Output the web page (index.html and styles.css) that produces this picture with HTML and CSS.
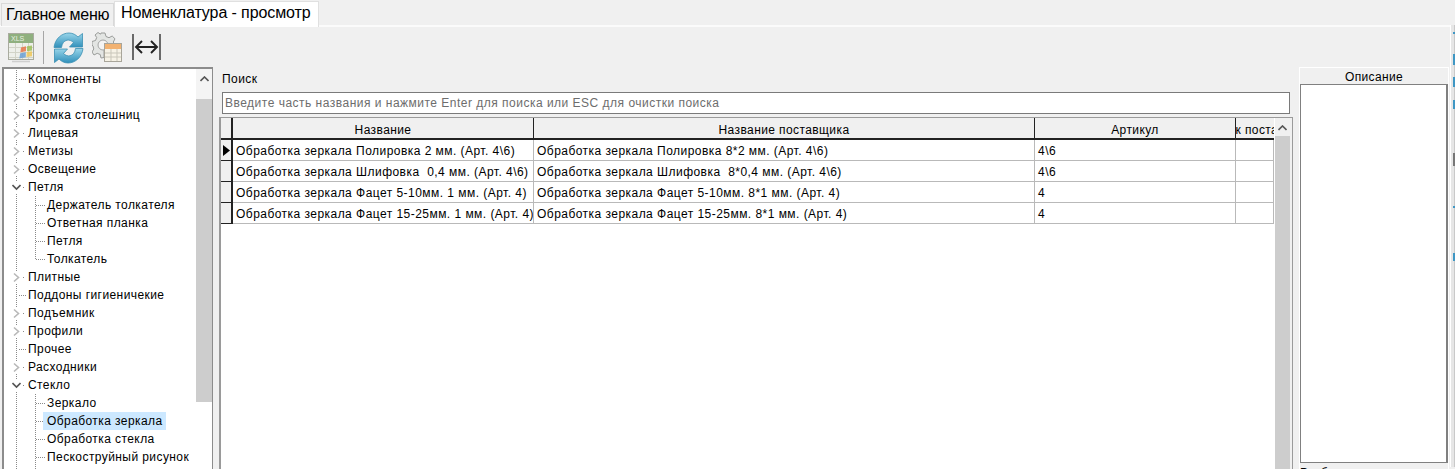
FILE: index.html
```html
<!DOCTYPE html>
<html lang="ru">
<head>
<meta charset="utf-8">
<title>Номенклатура - просмотр</title>
<link rel="stylesheet" href="styles.css">
</head>
<body>
<div class="page">
  <div class="tabs">
    <div class="tab">Главное меню</div>
    <div class="tab active">Номенклатура - просмотр</div>
  </div>
  <div class="toolbar">
    <svg class="ic ic-xls" width="28" height="31" viewBox="0 0 28 31">
      <rect x="1.5" y="1.5" width="25" height="26" fill="#eef0ea" stroke="#a9ab9f"/>
      <rect x="2" y="2" width="24" height="9" fill="#8fb07f"/>
      <text x="4" y="9" class="xls-t">XLS</text>
      <path d="M2 15.5H26M2 20.5H26M2 25.5H26M8.5 11V27M15.5 11V27M21.5 11V27" stroke="#d2d4c8" fill="none"/>
      <g class="flag">
        <path d="M14 15.5l5-1.2v5l-5.6 1z" fill="#e8764a"/>
        <path d="M20 14.2l5-.7v5l-5 .7z" fill="#9dc05c"/>
        <path d="M13.2 21.2l5.6-1v5l-6.5 1.2z" fill="#6a9fd4"/>
        <path d="M19.8 20l5.2-.7v5l-5.6.8z" fill="#f0c85a"/>
      </g>
      <path d="M5 29.5H23" stroke="#cfcfcf" stroke-width="1.5"/>
    </svg>
    <div class="sep"></div>
    <svg class="ic ic-ref" width="31" height="32" viewBox="0 0 31 32">
      <defs>
        <linearGradient id="bl" x1="0" y1="0" x2="0" y2="1">
          <stop offset="0" stop-color="#9ad6ea"/>
          <stop offset="1" stop-color="#2f8fba"/>
        </linearGradient>
      </defs>
      <g fill="url(#bl)" stroke="#3b8fb2" stroke-width=".8">
        <path d="M1 15.500C2 6.500 9 1 16 1C20 1 23 3 25 5L29.500 1.500V15H16.500L20.500 10.500C18.500 8.500 16 7.800 14 8.200C11 8.800 9 11.500 8.500 15.500Z"/>
        <path d="M30 16.500C29 25.500 22 31 15 31C11 31 8 29 6 27L1.500 30.500V17H14.500L10.500 21.500C12.500 23.500 15 24.200 17 23.800C20 23.200 22 20.500 22.500 16.500Z"/>
      </g>
    </svg>
    <svg class="ic ic-gear" width="30" height="30" viewBox="0 0 30 30">
      <path d="M9 1h4l1 3.500 3 1.200 3.200-1.700 2.800 2.800-1.700 3.200 1 2.500H12v13l-3 .5-.8-3.500-3-1.200L2 23l-2-3 1.800-3L1 14l-1-1v-3.500l3.500-1 1.200-3L3 3l3-2.500 2.500 1.700z" fill="#e3e5e3" stroke="#9a9c9a"/>
      <circle cx="11" cy="13" r="5" fill="#f4f4f4" stroke="#a4a6a4"/>
      <rect x="12.500" y="11.500" width="17" height="18" fill="#f6f2e6" stroke="#a8a59a"/>
      <rect x="13" y="12" width="16" height="5" fill="#f2b271"/>
      <path d="M13 21h16M13 25h16M19 17v12M25 17v12" stroke="#c9c6ba" fill="none"/>
    </svg>
    <svg class="ic ic-fit" width="29" height="28" viewBox="0 0 29 28">
      <path d="M1 1V27M28 1V27" stroke="#222" stroke-width="1.300" fill="none"/>
      <path d="M4 14H25M10 8L4 14L10 20M19 8L25 14L19 20" stroke="#222" stroke-width="1.900" fill="none"/>
    </svg>
  </div>
  <div class="main">
    <div class="tree">
      <div class="tree-list">
        <div class="node"><span class="stem"></span><span class="tick"></span><span class="lbl">Компоненты</span></div>
        <div class="node"><span class="stem"><svg class="chev" width="9" height="11" viewBox="0 0 9 11"><path d="M2 1.500L6.500 5.500L2 9.500" class="chev-c"/></svg></span><span class="tick short"></span><span class="lbl">Кромка</span></div>
        <div class="node"><span class="stem"><svg class="chev" width="9" height="11" viewBox="0 0 9 11"><path d="M2 1.500L6.500 5.500L2 9.500" class="chev-c"/></svg></span><span class="tick short"></span><span class="lbl">Кромка столешниц</span></div>
        <div class="node"><span class="stem"><svg class="chev" width="9" height="11" viewBox="0 0 9 11"><path d="M2 1.500L6.500 5.500L2 9.500" class="chev-c"/></svg></span><span class="tick short"></span><span class="lbl">Лицевая</span></div>
        <div class="node"><span class="stem"><svg class="chev" width="9" height="11" viewBox="0 0 9 11"><path d="M2 1.500L6.500 5.500L2 9.500" class="chev-c"/></svg></span><span class="tick short"></span><span class="lbl">Метизы</span></div>
        <div class="node"><span class="stem"><svg class="chev" width="9" height="11" viewBox="0 0 9 11"><path d="M2 1.500L6.500 5.500L2 9.500" class="chev-c"/></svg></span><span class="tick short"></span><span class="lbl">Освещение</span></div>
        <div class="node"><span class="stem"><svg class="chev" width="9" height="11" viewBox="0 0 9 11"><path d="M.5 3L4.500 7L8.500 3" class="chev-o"/></svg></span><span class="tick short"></span><span class="lbl">Петля</span></div>
        <div class="node"><span class="stem"></span><span class="stem2"></span><span class="tick"></span><span class="lbl">Держатель толкателя</span></div>
        <div class="node"><span class="stem"></span><span class="stem2"></span><span class="tick"></span><span class="lbl">Ответная планка</span></div>
        <div class="node"><span class="stem"></span><span class="stem2"></span><span class="tick"></span><span class="lbl">Петля</span></div>
        <div class="node"><span class="stem"></span><span class="stem2 last"></span><span class="tick"></span><span class="lbl">Толкатель</span></div>
        <div class="node"><span class="stem"><svg class="chev" width="9" height="11" viewBox="0 0 9 11"><path d="M2 1.500L6.500 5.500L2 9.500" class="chev-c"/></svg></span><span class="tick short"></span><span class="lbl">Плитные</span></div>
        <div class="node"><span class="stem"></span><span class="tick"></span><span class="lbl">Поддоны гигиеничекие</span></div>
        <div class="node"><span class="stem"><svg class="chev" width="9" height="11" viewBox="0 0 9 11"><path d="M2 1.500L6.500 5.500L2 9.500" class="chev-c"/></svg></span><span class="tick short"></span><span class="lbl">Подъемник</span></div>
        <div class="node"><span class="stem"><svg class="chev" width="9" height="11" viewBox="0 0 9 11"><path d="M2 1.500L6.500 5.500L2 9.500" class="chev-c"/></svg></span><span class="tick short"></span><span class="lbl">Профили</span></div>
        <div class="node"><span class="stem"></span><span class="tick"></span><span class="lbl">Прочее</span></div>
        <div class="node"><span class="stem"><svg class="chev" width="9" height="11" viewBox="0 0 9 11"><path d="M2 1.500L6.500 5.500L2 9.500" class="chev-c"/></svg></span><span class="tick short"></span><span class="lbl">Расходники</span></div>
        <div class="node"><span class="stem"><svg class="chev" width="9" height="11" viewBox="0 0 9 11"><path d="M.5 3L4.500 7L8.500 3" class="chev-o"/></svg></span><span class="tick short"></span><span class="lbl">Стекло</span></div>
        <div class="node"><span class="stem"></span><span class="stem2"></span><span class="tick"></span><span class="lbl">Зеркало</span></div>
        <div class="node"><span class="stem"></span><span class="stem2"></span><span class="tick"></span><span class="lbl selected">Обработка зеркала</span></div>
        <div class="node"><span class="stem"></span><span class="stem2"></span><span class="tick"></span><span class="lbl">Обработка стекла</span></div>
        <div class="node"><span class="stem"></span><span class="stem2"></span><span class="tick"></span><span class="lbl">Пескоструйный рисунок</span></div>
        <div class="node"><span class="stem"></span><span class="stem2"></span></div>
      </div>
      <div class="vbar tree-bar">
        <div class="vbar-up"><svg width="9" height="6" viewBox="0 0 9 6"><path d="M.5 5L4.500 1L8.500 5" class="up"/></svg></div>
        <div class="vbar-thumb"></div>
      </div>
    </div>

    <div class="center">
      <div class="search-label">Поиск</div>
      <input class="search" type="text" placeholder="Введите часть названия и нажмите Enter для поиска или ESC для очистки поиска">
      <div class="grid">
        <div class="grid-body">
          <div class="row head">
            <div class="ind"></div>
            <div class="cell c1">Название</div>
            <div class="cell c2">Название поставщика</div>
            <div class="cell c3">Артикул</div>
            <div class="cell c4"><span>Срок поставки</span></div>
          </div>
          <div class="row">
            <div class="ind"><svg width="7" height="11" viewBox="0 0 7 11"><path d="M0 0L7 5.500L0 11Z"/></svg></div>
            <div class="cell c1">Обработка зеркала Полировка 2 мм. (Арт. 4\6)</div>
            <div class="cell c2">Обработка зеркала Полировка 8*2 мм. (Арт. 4\6)</div>
            <div class="cell c3">4\6</div>
            <div class="cell c4"></div>
          </div>
          <div class="row">
            <div class="ind"></div>
            <div class="cell c1">Обработка зеркала Шлифовка&nbsp; 0,4 мм. (Арт. 4\6)</div>
            <div class="cell c2">Обработка зеркала Шлифовка&nbsp; 8*0,4 мм. (Арт. 4\6)</div>
            <div class="cell c3">4\6</div>
            <div class="cell c4"></div>
          </div>
          <div class="row">
            <div class="ind"></div>
            <div class="cell c1">Обработка зеркала Фацет 5-10мм. 1 мм. (Арт. 4)</div>
            <div class="cell c2">Обработка зеркала Фацет 5-10мм. 8*1 мм. (Арт. 4)</div>
            <div class="cell c3">4</div>
            <div class="cell c4"></div>
          </div>
          <div class="row">
            <div class="ind"></div>
            <div class="cell c1">Обработка зеркала Фацет 15-25мм. 1 мм. (Арт. 4)</div>
            <div class="cell c2">Обработка зеркала Фацет 15-25мм. 8*1 мм. (Арт. 4)</div>
            <div class="cell c3">4</div>
            <div class="cell c4"></div>
          </div>
        </div>
        <div class="vbar grid-bar">
          <div class="vbar-up"><svg width="9" height="6" viewBox="0 0 9 6"><path d="M.5 5L4.500 1L8.500 5" class="up"/></svg></div>
          <div class="vbar-thumb"></div>
        </div>
      </div>
    </div>

    <div class="desc">
      <div class="desc-head">Описание</div>
      <div class="desc-box"></div>
      <div class="desc-foot">Разбивка</div>
    </div>

    <div class="edge">
      <i class="m m1"></i><i class="m m2"></i><i class="m m3"></i><i class="m m4"></i><i class="m m5"></i><i class="m m6"></i><i class="m m7"></i>
    </div>
  </div>
</div>
</body>
</html>
```
FILE: styles.css
```css
* { box-sizing: border-box; }
html, body { margin: 0; padding: 0; }
body {
  background: #f0f0f0;
  font-family: "Liberation Sans", Arial, sans-serif;
  font-size: 12px;
  color: #000;
}
.page { width: 1455px; height: 469px; overflow: hidden; }

.tabs {
  height: 27px;
  display: flex;
  align-items: flex-end;
  background: #f0f0f0;
  border-bottom: 2px solid #fbfbfb;
  padding-left: 1px;
}
.tab {
  height: 23px;
  margin-bottom: -1px;
  width: 113px;
  padding-left: 4px;
  font-size: 16px;
  letter-spacing: -.25px;
  line-height: 21px;
  background: #f0f0f0;
  border: 1px solid #d9d9d9;
  border-bottom: 0;
  white-space: nowrap;
}
.tab.active {
  height: 26px;
  width: 205px;
  margin-bottom: -2px;
  padding-left: 6px;
  background: #fff;
  line-height: 22px;
  letter-spacing: -.1px;
  border-color: #e0e0e0;
}

.toolbar {
  height: 40px;
  display: flex;
  align-items: flex-start;
  padding-left: 7px;
  padding-top: 4px;
  background: #f0f0f0;
}
.ic { display: block; flex: none; }
.ic-xls { margin-top: 1px; }
.sep { width: 1px; height: 33px; background: #a6a6a6; margin: 0 9px 0 8px; flex: none; }
.ic-ref { margin-top: 1px; }
.ic-gear { margin: 1px 0 0 8px; }
.ic-fit { margin: 2px 0 0 10px; }
.xls-t { font: 7px "Liberation Sans", Arial, sans-serif; fill: #e8f0e0; }
.flag { opacity: .85; }

.main { display: flex; height: 402px; padding-left: 2px; }

.tree {
  width: 211px;
  height: 440px;
  flex: none;
  display: flex;
  background: #fff;
  border: 1px solid #8c8c8c;
  border-left-width: 2px;
  border-top-width: 2px;
}
.tree-list { width: 192px; padding: 1px 0 0 1px; flex: none; overflow: hidden; }
.node { height: 18px; display: flex; align-items: center; white-space: nowrap; }
.stem {
  width: 14px;
  height: 18px;
  flex: none;
  display: flex;
  align-items: center;
  padding-left: 7px;
  background: repeating-linear-gradient(#8a8a8a 0 1px, transparent 1px 2px) 11px 0 / 1px 100% no-repeat;
}
.stem2 {
  width: 17px;
  height: 18px;
  flex: none;
  background: repeating-linear-gradient(#8a8a8a 0 1px, transparent 1px 2px) 16px 0 / 1px 100% no-repeat;
}
.stem2.last { background-size: 1px 9px; }
.stem2 + .tick { width: 10px; }
.chev { background: #fff; display: block; flex: none; }
.chev-c { fill: none; stroke: #b8b8b8; stroke-width: 1.6; }
.chev-o { fill: none; stroke: #555; stroke-width: 1.6; }
.tick {
  width: 8px;
  height: 1px;
  flex: none;
  background: repeating-linear-gradient(90deg, #8a8a8a 0 1px, transparent 1px 2px);
}
.tick.short { background: linear-gradient(90deg, transparent 4px, #8a8a8a 4px 5px, transparent 5px); }
.lbl { padding-left: 1px; height: 18px; line-height: 18px; letter-spacing: .42px; }
.lbl.selected { background: #cce8ff; padding: 0 3px 0 4px; margin-left: -3px; }

.vbar { width: 16px; flex: none; background: #f0f0f0; display: flex; flex-direction: column; }
.vbar-up { display: flex; justify-content: center; align-items: center; flex: none; }
.up { fill: none; stroke: #555; stroke-width: 1.6; }
.vbar-thumb { background: #cdcdcd; }
.tree-bar { background: #fff; }
.tree-bar .vbar-up { height: 30px; background: #f4f4f4; padding-bottom: 10px; }
.tree-bar .vbar-thumb { height: 303px; }

.center { width: 1074px; flex: none; margin-left: 6px; }
.search-label { height: 25px; padding: 5px 0 0 3px; line-height: 14px; letter-spacing: .42px; }
.search {
  display: block;
  width: 1068px;
  height: 22px;
  margin: 0 0 3px 3px;
  padding: 0 2px;
  border: 1px solid #7a7a7a;
  background: #fff;
  border-radius: 0;
  outline: 0;
  font: 12px "Liberation Sans", Arial, sans-serif;
  letter-spacing: .49px;
}
.search::placeholder { color: #6d6d6d; opacity: 1; }

.grid {
  height: 400px;
  display: flex;
  background: #fff;
  border: 1px solid #9a9a9a;
  border-width: 1px 1px 0 1px;
  box-shadow: inset 1px 0 0 #9a9a9a;
}
.grid-body { width: 1054px; flex: none; margin-left: 1px; }
.row {
  display: grid;
  grid-template-columns: 12px 301px 501px 201px 38px;
  height: 21px;
  letter-spacing: .46px;
}
.row.head { height: 22px; letter-spacing: .4px; }
.ind {
  background: #f0f0f0;
  border-right: 2px solid #222;
  border-bottom: 1px solid #222;
  display: flex;
  align-items: center;
  padding-left: 2px;
}
.row.head .ind { border-bottom-width: 2px; }
.cell {
  height: 100%;
  border-right: 1px solid #b9b9b9;
  border-bottom: 1px solid #b9b9b9;
  padding: 1px 0 0 3px;
  line-height: 20px;
  overflow: hidden;
  white-space: nowrap;
}
.row.head .cell {
  background: #f0f0f0;
  border-right: 1px solid #222;
  border-bottom: 2px solid #222;
  text-align: center;
  padding: 2px 0 0;
  display: flex;
  justify-content: center;
}
.row.head .c4 { border-right: 0; }
.c4 span { flex: none; }

.grid-bar { width: 17px; background: #f0f0f0; }
.grid-bar .vbar-up { height: 20px; padding-right: 2px; }
.grid-bar .vbar-thumb { height: 400px; width: 15px; margin-top: -2px; }

.desc {
  width: 150px;
  height: 402px;
  flex: none;
  margin-left: 6px;
  border-top: 1px solid #fff;
  border-left: 1px solid #fff;
  border-right: 1px solid #fff;
  background: #f0f0f0;
  overflow: hidden;
}
.desc-head { height: 16px; text-align: center; line-height: 19px; letter-spacing: .36px; }
.desc-box {
  height: 379px;
  background: #fff;
  border: 1px solid #808080;
  border-right-width: 2px;
}
.desc-foot { padding-top: 3px; line-height: 14px; letter-spacing: .42px; }

.edge {
  width: 5px;
  flex: none;
  height: 442px;
  margin: -42px 0 0 1px;
  border-left: 1px solid #fff;
  background: linear-gradient(90deg, #e6e6e6 0 3px, #c9c9c9 3px);
  display: flex;
  flex-direction: column;
  align-items: flex-end;
}
.m { display: block; width: 2px; background: #3f97c4; flex: none; }
.m1 { height: 2px; margin-top: 7px; }
.m2 { height: 11px; margin-top: 20px; }
.m3 { height: 10px; margin-top: 12px; }
.m4 { height: 9px; margin-top: 13px; }
.m5 { height: 13px; margin-top: 44px; background: #777; }
.m6 { height: 2px; margin-top: 40px; }
.m7 { height: 8px; margin-top: 45px; }
```
